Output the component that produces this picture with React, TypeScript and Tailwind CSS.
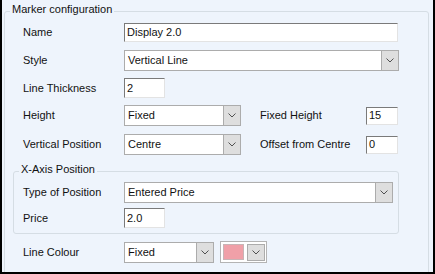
const FONT = "font-['Liberation_Sans',Arial,sans-serif]";

function Chevron() {
  return (
    <svg width="8" height="5" viewBox="0 0 8 5" className="block">
      <polyline points="0.5,0.5 4,4 7.5,0.5" fill="none" stroke="#505050" strokeWidth="1" />
    </svg>
  );
}

function TextBox({ value, w, h = 'h-[20px]' }: { value: string; w: string; h?: string }) {
  return (
    <div
      className={`${w} ${h} flex items-center bg-white border border-t-[#7a7a7a] border-l-[#7a7a7a] border-r-[#e3e3e3] border-b-[#e3e3e3] pl-[2px] text-[11px] text-[#111]`}
    >
      {value}
    </div>
  );
}

function Select({ value, w }: { value: string; w: string }) {
  return (
    <div className={`${w} h-[21px] flex items-stretch bg-white border border-[#acacac]`}>
      <div className="flex-1 flex items-center pl-[3px] text-[11px] text-[#111]">{value}</div>
      <div className="w-[17px] flex items-center justify-center bg-[#dedede] border-l border-[#acacac]">
        <Chevron />
      </div>
    </div>
  );
}

function Label({ text, w = 'w-[101px]' }: { text: string; w?: string }) {
  return <div className={`${w} shrink-0 text-[11px] text-[#111]`}>{text}</div>;
}

export default function App() {
  return (
    <div className={`${FONT} w-[435px] h-[274px] overflow-hidden bg-[#eef4fc] border-l-2 border-r-2 border-b-2 border-black`}>
      <fieldset className="ml-[2px] mt-[2px] w-[425px] h-[300px] border border-[#d5dde4] rounded-[3px]">
        <legend className="ml-[5px] px-[2px] pb-[4px] text-[11px] leading-[14px] text-[#111]">
          Marker configuration
        </legend>

        <div className="pt-[3px]">
          <div className="ml-[18px] h-[27px] flex items-start">
            <div className="h-[19px] flex items-center"><Label text="Name" /></div>
            <TextBox value="Display 2.0" w="w-[274px]" h="h-[19px]" />
          </div>
          <div className="ml-[18px] h-[28px] flex items-start">
            <div className="h-[21px] flex items-center"><Label text="Style" /></div>
            <Select value="Vertical Line" w="w-[275px]" />
          </div>
          <div className="ml-[18px] h-[27px] flex items-start">
            <div className="h-[20px] flex items-center"><Label text="Line Thickness" /></div>
            <TextBox value="2" w="w-[41px]" />
          </div>
          <div className="ml-[18px] h-[29px] flex items-start">
            <div className="h-[21px] flex items-center"><Label text="Height" /></div>
            <Select value="Fixed" w="w-[117px]" />
            <div className="ml-[19px] h-[21px] flex items-center">
              <Label text="Fixed Height" w="w-[106px]" />
              <TextBox value="15" w="w-[32px]" h="h-[18px]" />
            </div>
          </div>
          <div className="ml-[18px] h-[28px] flex items-start">
            <div className="h-[21px] flex items-center"><Label text="Vertical Position" /></div>
            <Select value="Centre" w="w-[117px]" />
            <div className="ml-[19px] h-[21px] flex items-center">
              <Label text="Offset from Centre" w="w-[106px]" />
              <TextBox value="0" w="w-[32px]" h="h-[18px]" />
            </div>
          </div>

          <fieldset className="ml-[8px] w-[386px] border border-[#d5dde4] rounded-[3px] pb-[5px]">
            <legend className="ml-[5px] px-[2px] pb-[4px] text-[11px] leading-[14px] text-[#111]">
              X-Axis Position
            </legend>
            <div className="pt-[2px] pl-[9px]">
              <div className="h-[26px] flex items-start">
                <div className="h-[21px] flex items-center"><Label text="Type of Position" /></div>
                <Select value="Entered Price" w="w-[269px]" />
              </div>
              <div className="h-[20px] flex items-start">
                <div className="h-[20px] flex items-center"><Label text="Price" /></div>
                <TextBox value="2.0" w="w-[41px]" />
              </div>
            </div>
          </fieldset>

          <div className="ml-[18px] mt-[8px] flex items-start">
            <div className="h-[21px] flex items-center"><Label text="Line Colour" /></div>
            <Select value="Fixed" w="w-[90px]" />
            <div className="ml-[6px] -mt-[1px] w-[47px] h-[22px] flex items-center gap-[3px] pl-[2px] bg-white border border-[#b4b4b4]">
              <div className="w-[21px] h-[16px] bg-[#f0a0a8] border border-[#c8b4b6]" />
              <div className="w-[18px] h-[17px] flex items-center justify-center bg-[#dedede] border border-[#acacac]">
                <Chevron />
              </div>
            </div>
          </div>
        </div>
      </fieldset>
    </div>
  );
}
